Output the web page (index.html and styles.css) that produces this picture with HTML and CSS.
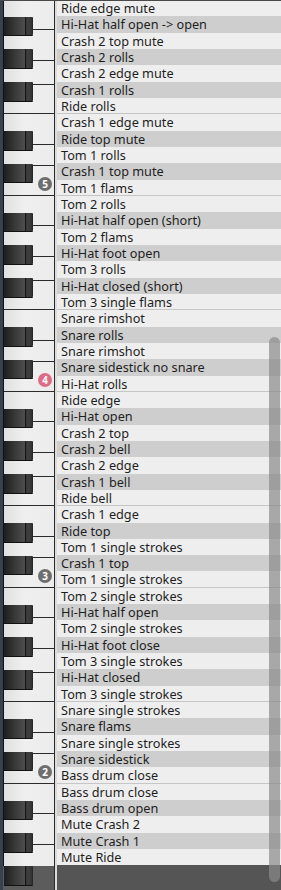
FILE: index.html
```html
<!DOCTYPE html>
<html lang="en">
<head>
    <meta charset="UTF-8">
    <title>Drum map</title>
    <link rel="stylesheet" href="styles.css">
</head>
<body>
    <div class="editor">
        <div class="keyboard">
            <div class="octave">
                <div class="white b"></div><div class="white a"></div><div class="white g"></div><div class="white f"></div><div class="white e"></div><div class="white d"></div><div class="white c"></div>
                <div class="black as"></div><div class="black gs"></div><div class="black fs"></div><div class="black ds"></div><div class="black cs"></div>
                <span class="label">5</span>
            </div>
            <div class="octave">
                <div class="white b"></div><div class="white a"></div><div class="white g"></div><div class="white f"></div><div class="white e"></div><div class="white d"></div><div class="white c"></div>
                <div class="black as"></div><div class="black gs"></div><div class="black fs"></div><div class="black ds"></div><div class="black cs"></div>
                <span class="label middle">4</span>
            </div>
            <div class="octave">
                <div class="white b"></div><div class="white a"></div><div class="white g"></div><div class="white f"></div><div class="white e"></div><div class="white d"></div><div class="white c"></div>
                <div class="black as"></div><div class="black gs"></div><div class="black fs"></div><div class="black ds"></div><div class="black cs"></div>
                <span class="label">3</span>
            </div>
            <div class="octave">
                <div class="white b"></div><div class="white a"></div><div class="white g"></div><div class="white f"></div><div class="white e"></div><div class="white d"></div><div class="white c"></div>
                <div class="black as"></div><div class="black gs"></div><div class="black fs"></div><div class="black ds"></div><div class="black cs"></div>
                <span class="label">2</span>
            </div>
            <div class="octave">
                <div class="white b"></div><div class="white a"></div><div class="white g"></div><div class="white f"></div><div class="white e"></div><div class="white d"></div><div class="white c"></div>
                <div class="black as"></div><div class="black gs"></div><div class="black fs"></div><div class="black ds"></div><div class="black cs"></div>
            </div>
            <div class="dim"></div>
        </div>

        <div class="gap"></div>

        <div class="list">
            <div class="row">Ride edge mute</div>
            <div class="row dark">Hi-Hat half open -&gt; open</div>
            <div class="row">Crash 2 top mute</div>
            <div class="row dark">Crash 2 rolls</div>
            <div class="row">Crash 2 edge mute</div>
            <div class="row dark">Crash 1 rolls</div>
            <div class="row sep">Ride rolls</div>
            <div class="row">Crash 1 edge mute</div>
            <div class="row dark">Ride top mute</div>
            <div class="row">Tom 1 rolls</div>
            <div class="row dark">Crash 1 top mute</div>
            <div class="row sep">Tom 1 flams</div>

            <div class="row">Tom 2 rolls</div>
            <div class="row dark">Hi-Hat half open (short)</div>
            <div class="row">Tom 2 flams</div>
            <div class="row dark">Hi-Hat foot open</div>
            <div class="row">Tom 3 rolls</div>
            <div class="row dark">Hi-Hat closed (short)</div>
            <div class="row sep">Tom 3 single flams</div>
            <div class="row">Snare rimshot</div>
            <div class="row dark">Snare rolls</div>
            <div class="row">Snare rimshot</div>
            <div class="row dark">Snare sidestick no snare</div>
            <div class="row sep">Hi-Hat rolls</div>

            <div class="row">Ride edge</div>
            <div class="row dark">Hi-Hat open</div>
            <div class="row">Crash 2 top</div>
            <div class="row dark">Crash 2 bell</div>
            <div class="row">Crash 2 edge</div>
            <div class="row dark">Crash 1 bell</div>
            <div class="row sep">Ride bell</div>
            <div class="row">Crash 1 edge</div>
            <div class="row dark">Ride top</div>
            <div class="row">Tom 1 single strokes</div>
            <div class="row dark">Crash 1 top</div>
            <div class="row sep">Tom 1 single strokes</div>

            <div class="row">Tom 2 single strokes</div>
            <div class="row dark">Hi-Hat half open</div>
            <div class="row">Tom 2 single strokes</div>
            <div class="row dark">Hi-Hat foot close</div>
            <div class="row">Tom 3 single strokes</div>
            <div class="row dark">Hi-Hat closed</div>
            <div class="row sep">Tom 3 single strokes</div>
            <div class="row">Snare single strokes</div>
            <div class="row dark">Snare flams</div>
            <div class="row">Snare single strokes</div>
            <div class="row dark">Snare sidestick</div>
            <div class="row sep">Bass drum close</div>

            <div class="row">Bass drum close</div>
            <div class="row dark">Bass drum open</div>
            <div class="row">Mute Crash 2</div>
            <div class="row dark">Mute Crash 1</div>
            <div class="row">Mute Ride</div>

            <div class="rest"></div>
            <div class="scrollbar"></div>
        </div>
    </div>
</body>
</html>
```

FILE: styles.css
```css
/* page */
body {
    margin: 0;
    background: #555555;
    font-family: "Noto Sans", "Open Sans", sans-serif;
    overflow: hidden;
}

.editor {
    position: relative;
    display: flex;
    width: 281px;
    height: 890px;
    overflow: hidden;
}

/* thin dark edge along the top */
.editor::after {
    content: "";
    position: absolute;
    left: 0;
    right: 0;
    top: 0;
    height: 1px;
    background: #4a4a4a;
}

/* piano keyboard */
.keyboard {
    position: relative;
    z-index: 0;
    flex: none;
    width: 50px;
    height: 890px;
    overflow: hidden;
    border-left: 3px solid #36424e;
    box-shadow: inset 1px 0 #111111;
    padding-left: 1px;
    border-right: 1px solid #2a2a2a;
}

.octave {
    position: relative;
    display: flex;
    flex-direction: column;
    height: 196px;
}

.white {
    flex: none;
    box-sizing: border-box;
    border-bottom: 1px solid #2b2b2b;
    background: linear-gradient(to right, #e0e0e0, #efefef 40%, #ececec);
}

.white.b { height: 30px; }
.white.a { height: 31px; }
.white.g { height: 24px; }
.white.f { height: 29px; }
.white.e { height: 31px; }
.white.d { height: 21px; }
.white.c { height: 30px; }

.black {
    position: absolute;
    z-index: 2;
    left: 0;
    width: 29px;
    height: 18.5px;
    border-radius: 0 1px 1px 0;
    background: linear-gradient(to right,
        #1e1e1e 0%, #3a3a3a 40%, #4e4e4e 72%,
        #161616 73%, #161616 76%,
        #404040 78%, #383838 93%, #222222 100%);
    box-shadow: 0 1px 0 #111111;
}

.black.as { top: 16.5px; }
.black.gs { top: 49px; }
.black.fs { top: 82px; }
.black.ds { top: 131px; }
.black.cs { top: 163.5px; }

.label {
    position: absolute;
    z-index: 3;
    left: 34px;
    top: 176.5px;
    width: 14px;
    height: 14px;
    border-radius: 50%;
    background: #6e6e6e;
    color: #ffffff;
    font-size: 10px;
    font-weight: bold;
    line-height: 14px;
    text-align: center;
}

.label.middle {
    background: #df6c87;
}

/* keys below the last instrument are greyed out */
.dim {
    position: absolute;
    z-index: 1;
    left: 0;
    right: 0;
    top: 866px;
    bottom: 0;
    background: #5c5c5c;
}

.gap {
    flex: none;
    width: 2px;
    background: #dcdcdc;
}

/* instrument list */
.list {
    position: relative;
    flex: 1;
    display: flex;
    flex-direction: column;
    min-width: 0;
}

.row {
    flex: none;
    height: 16.333px;
    line-height: 16.333px;
    padding-left: 4px;
    background: #eeeeee;
    color: #1e1e1e;
    font-size: 12.7px;
    white-space: nowrap;
    overflow: hidden;
}

.row.dark {
    background: #cecece;
}

.row.sep {
    box-shadow: inset 0 -1px #c6c6c6;
}

.rest {
    flex: 1;
    background: #555555;
}

.scrollbar {
    position: absolute;
    right: 1px;
    top: 337px;
    bottom: 8px;
    width: 11px;
    border-radius: 6px;
    background: rgba(138, 138, 138, 0.7);
}
```
